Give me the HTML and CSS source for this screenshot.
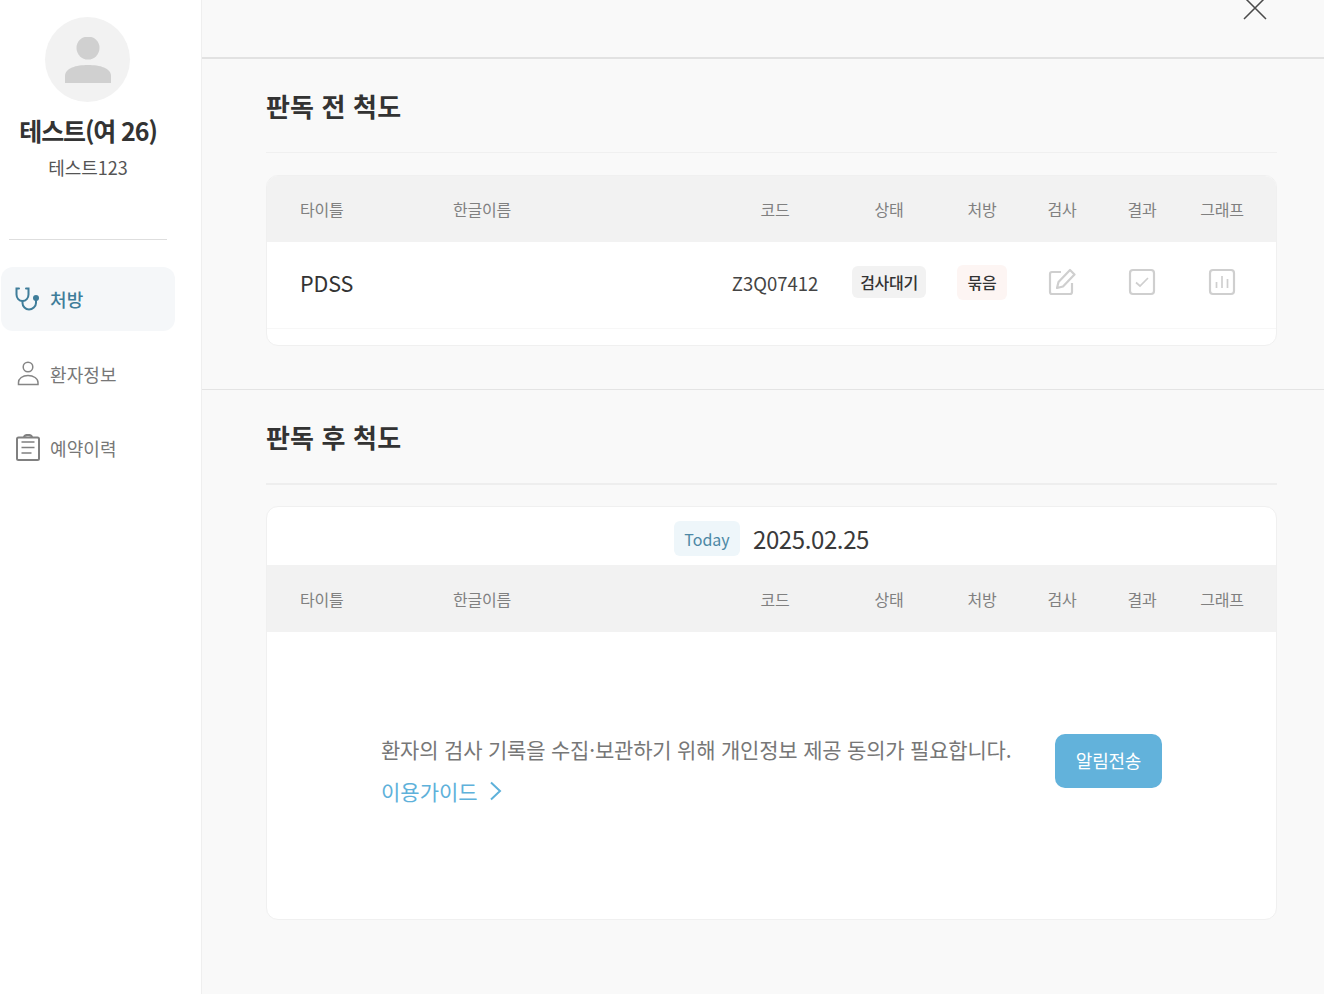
FILE: index.html
```html
<!DOCTYPE html>
<html lang="ko">
<head>
<meta charset="utf-8">
<title>검사</title>
<link rel="stylesheet" href="styles.css">
</head>
<body>
<div class="app">
  <aside class="side">
    <div class="avatar">
      <svg width="46" height="46" viewBox="0 0 46 46"><circle cx="23" cy="11" r="11.500" fill="#d0d0d0"/><path d="M0 46v-7c0-8 11-11 23-11s23 3 23 11v7z" fill="#d0d0d0"/></svg>
    </div>
    <div class="pname">테스트(여 26)</div>
    <div class="pid">테스트123</div>
    <div class="side-line"></div>
    <nav class="nav">
      <a class="nav-item active">
        <svg class="nav-ico" width="26" height="26" viewBox="0 0 26 26" fill="none" stroke="#3f7d9a" stroke-width="2" stroke-linecap="round"><path d="M4 2.500H1.500v6c0 3.500 2.500 6.500 6 6.500s6-3 6-6.500v-6H11"/><path d="M7.500 15v2c0 3.500 3 6.500 6.500 6.500s7-3 7-6.500v-3"/><circle cx="21" cy="12" r="3" fill="#3f7d9a" stroke="none"/></svg>
        <span>처방</span>
      </a>
      <a class="nav-item">
        <svg class="nav-ico" width="26" height="26" viewBox="0 0 26 26" fill="none" stroke="#858585" stroke-width="1.500"><circle cx="13" cy="6" r="4.800"/><path d="M3.500 23.500v-2c0-4 4-7 9.500-7s10 3 10 7v2z"/></svg>
        <span>환자정보</span>
      </a>
      <a class="nav-item">
        <svg class="nav-ico" width="26" height="28" viewBox="0 0 26 28" fill="none" stroke="#808080" stroke-width="2"><rect x="2" y="3.500" width="22" height="22.500" rx="1.500"/><path d="M9 3.500c0-3.500 8-3.500 8 0"/><path d="M6.500 8h13M6.500 13.500h13M6.500 19h10" stroke-width="1.500"/></svg>
        <span>예약이력</span>
      </a>
    </nav>
  </aside>
  <main class="main">
    <header class="top">
      <svg class="close" width="24" height="24" viewBox="0 0 24 24" fill="none" stroke="#4a4a4a" stroke-width="1.500"><path d="M1 1l22 22M23 1L1 23"/></svg>
    </header>
    <section class="sec sec-a">
      <h2 class="sec-title">판독 전 척도</h2>
      <div class="card card-a">
        <div class="grid thead">
          <div class="c-l">타이틀</div><div class="c-l">한글이름</div><div>코드</div><div>상태</div><div>처방</div><div>검사</div><div>결과</div><div>그래프</div>
        </div>
        <div class="grid trow">
          <div class="c-l tname">PDSS</div>
          <div></div>
          <div class="tcode">Z3Q07412</div>
          <div><span class="tag tag-gray">검사대기</span></div>
          <div><span class="tag tag-pink">묶음</span></div>
          <div><svg width="28" height="28" viewBox="0 0 28 28" fill="none" stroke="#cfcfcf" stroke-width="2.200" stroke-linejoin="round"><path d="M13 4H4a2 2 0 0 0-2 2v18a2 2 0 0 0 2 2h18a2 2 0 0 0 2-2v-9"/><path d="M22 2l4.500 4.500L15 18.500l-6 1.500 1.500-6z"/></svg></div>
          <div><svg width="28" height="28" viewBox="0 0 28 28" fill="none" stroke="#cfcfcf" stroke-width="2.200"><rect x="2" y="2" width="24" height="24" rx="3"/><path d="M8 14.500l4 3.500 8-8" stroke-width="1.700"/></svg></div>
          <div><svg width="28" height="28" viewBox="0 0 28 28" fill="none" stroke="#cfcfcf" stroke-width="2.200"><rect x="2" y="2" width="24" height="24" rx="3"/><path d="M8.500 14v6M14 8v12M19.500 11v9" stroke-width="1.700"/></svg></div>
        </div>
      </div>
    </section>
    <section class="sec sec-b">
      <h2 class="sec-title">판독 후 척도</h2>
      <div class="card card-b">
        <div class="dateline"><span class="today">Today</span><span class="date">2025.02.25</span></div>
        <div class="grid thead thead-b">
          <div class="c-l">타이틀</div><div class="c-l">한글이름</div><div>코드</div><div>상태</div><div>처방</div><div>검사</div><div>결과</div><div>그래프</div>
        </div>
        <div class="notice">
          <div class="notice-text">
            <p class="msg">환자의 검사 기록을 수집·보관하기 위해 개인정보 제공 동의가 필요합니다.</p>
            <a class="guide">이용가이드<svg width="14" height="20" viewBox="0 0 14 20" fill="none" stroke="#5eb1da" stroke-width="2"><path d="M2 1.500l9 8.500-9 8.500"/></svg></a>
          </div>
          <button class="send">알림전송</button>
        </div>
      </div>
    </section>
  </main>
</div>
</body>
</html>
```
FILE: styles.css
```css
* { box-sizing: border-box; }
html, body { margin: 0; padding: 0; height: 994px; overflow: hidden; }
body { font-family: "Noto Sans CJK KR", "Noto Sans", sans-serif; color: #333; background: #fff; }
.app { display: flex; height: 994px; }
.side { width: 202px; flex: none; background: #fff; border-right: 1px solid #efefef; display: flex; flex-direction: column; align-items: stretch; padding-top: 17px; }
.avatar { width: 85px; height: 85px; margin-left: 45px; border-radius: 50%; background: #f2f2f2; display: flex; align-items: center; justify-content: center; }
.pname { margin-top: 10px; width: 176px; text-align: center; font-size: 25px; line-height: 36px; font-weight: 700; letter-spacing: -1.1px; color: #333; }
.pid { margin-top: 6px; width: 176px; text-align: center; font-size: 18px; line-height: 26px; letter-spacing: 0; color: #555; }
.side-line { margin: 59px 0 0 9px; width: 158px; height: 1px; background: #dedede; }
.nav { margin: 27px 0 0 1px; width: 174px; display: flex; flex-direction: column; gap: 10px; }
.nav-item { height: 64px; display: flex; align-items: center; gap: 9px; padding-left: 14px; border-radius: 12px; font-size: 18px; letter-spacing: 0.1px; color: #777; }
.nav-item.active { background: #f5f7f9; color: #3f7d9a; font-weight: 500; margin-bottom: 1px; }
.main { flex: 1; min-width: 0; background: #f9f9f9; display: flex; flex-direction: column; }
.top { height: 59px; flex: none; border-bottom: 2px solid #e2e2e2; position: relative; }
.close { position: absolute; right: 57px; top: -4px; }
.sec { padding: 0 47px 0 64px; }
.sec-a { height: 331px; border-bottom: 1px solid #e4e4e4; }
.sec-title { margin: 0; font-size: 26px; font-weight: 700; letter-spacing: 0.15px; color: #333; line-height: 38px; padding-top: 28px; height: 94px; border-bottom: 1px solid #f0f0f0; }
.sec-b .sec-title { border-bottom: 2px solid #eee; height: 95px; }
.card { background: #fff; border: 1px solid #f0f0f0; border-radius: 12px; overflow: hidden; }
.card-a { margin-top: 22px; height: 171px; }
.card-b { margin-top: 21px; height: 414px; }
.grid { display: grid; grid-template-columns: 153px 294px 122px 106px 80px 80px 80px 80px; align-items: center; text-align: center; }
.c-l { text-align: left; padding-left: 33px; }
.thead { height: 66px; background: #f2f2f2; font-size: 16px; letter-spacing: -0.2px; color: #808080; }
.thead-b { height: 67px; }
.trow { height: 87px; border-bottom: 1px solid #f7f7f7; background: #fff; }
.tname { font-size: 21.500px; color: #333; letter-spacing: -0.1px; padding-bottom: 5px; }
.tcode { font-size: 18.500px; color: #444; padding-bottom: 5px; }
.tag { display: inline-block; font-size: 16px; line-height: 24px; color: #333; text-align: center; border-radius: 6px; letter-spacing: -0.3px; font-weight: 500; position: relative; top: -3px; }
.tag-gray { background: #f2f2f2; height: 32px; width: 74px; padding-top: 4px; }
.tag-pink { background: #fdf5f3; height: 35px; width: 50px; padding-top: 5px; }
.trow svg { display: block; margin: -6px auto 0; }
.dateline { height: 58px; display: flex; align-items: center; justify-content: center; gap: 13px; padding-top: 4px; }
.today { background: #eef6fa; color: #4d88a5; font-size: 16px; font-weight: 400; height: 35px; line-height: 37px; width: 66px; text-align: center; border-radius: 6px; }
.date { font-size: 24px; color: #3a3a3a; letter-spacing: -0.4px; }
.notice { display: flex; padding: 102px 0 0 114px; }
.notice-text { width: 674px; }
.msg { margin: -1px 0 0; font-size: 21px; line-height: 32px; color: #777; letter-spacing: -0.2px; }
.guide { display: flex; align-items: center; gap: 11px; margin-top: 10px; font-size: 21px; line-height: 32px; color: #5eb1da; letter-spacing: 0; }
.send { width: 107px; height: 54px; border: 0; border-radius: 10px; background: #62b2db; color: #fff; font: 400 18px "Noto Sans CJK KR", sans-serif; letter-spacing: -0.2px; padding: 0 0 3px; }
```
